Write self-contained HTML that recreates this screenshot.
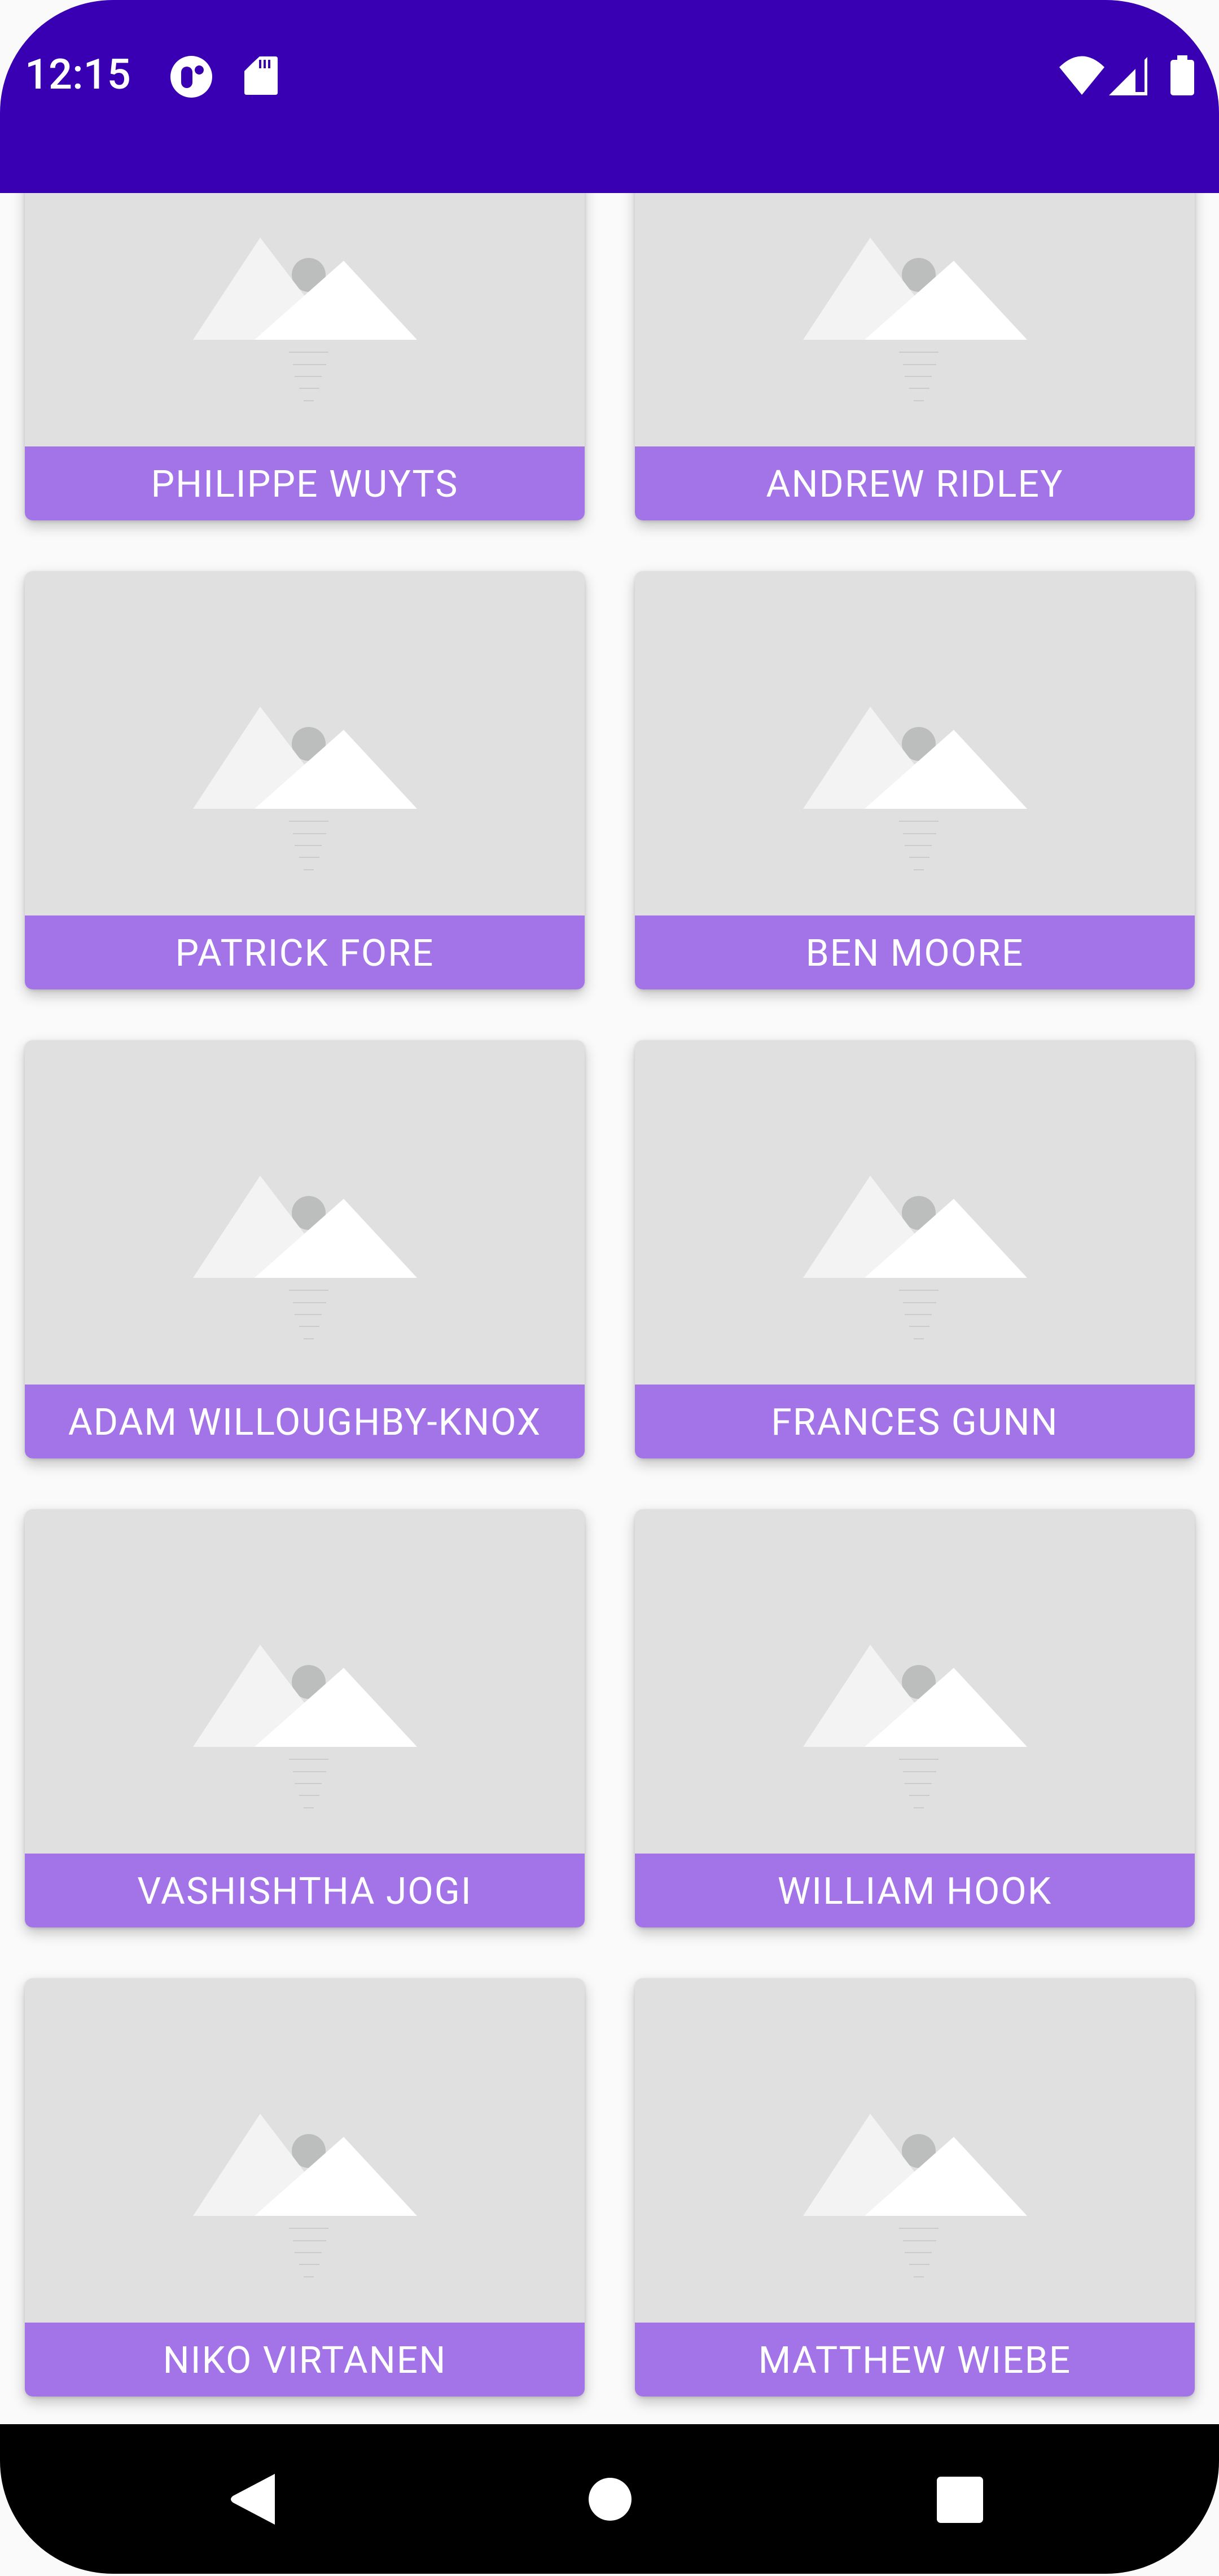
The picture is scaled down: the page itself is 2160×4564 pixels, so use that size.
<!DOCTYPE html>
<html><head><meta charset="utf-8"><style>
*{margin:0;padding:0;box-sizing:border-box}
body{width:2160px;height:4560px;background:#fafafa;position:relative;overflow:hidden;font-family:"Roboto","Liberation Sans",sans-serif}
.card{position:absolute;width:992px;height:741px;background:#e0e0e0;border-radius:14px;overflow:hidden;box-shadow:0 10px 24px rgba(0,0,0,0.22),0 2px 6px rgba(0,0,0,0.12)}
.card svg{position:absolute;left:0;top:0}
.lab{position:absolute;left:0;bottom:0;width:100%;height:131px;background:#a374e8;color:#fff;font-size:66px;letter-spacing:2px;text-align:center;line-height:136px}
.status{position:absolute;left:0;top:0;width:2160px;height:342px;background:#3900b3;border-radius:200px 200px 0 0}
.nav{position:absolute;left:0;top:4295px;width:2160px;height:265px;background:#000;border-radius:0 0 200px 200px}
</style></head><body>
<svg width="0" height="0" style="position:absolute"><defs><g id="ic" transform="translate(-44,0)">
<circle cx="547" cy="306" r="30" fill="#bcbdbd"/>
<polygon points="461,240 599,421 342,421" fill="#f3f3f3"/>
<polygon points="451,421 609,281 739,421" fill="#fff"/>
<g stroke="#c9cccc" stroke-width="2"><line x1="512" y1="443" x2="582" y2="443"/><line x1="519" y1="465" x2="578" y2="465"/><line x1="522" y1="486" x2="570" y2="486"/><line x1="530" y1="507" x2="566" y2="507"/><line x1="538" y1="529" x2="556" y2="529"/></g>
</g></defs></svg>

<div class="card" style="left:44px;top:181px"><svg width="992" height="741"><use href="#ic"/></svg><div class="lab">PHILIPPE WUYTS</div></div>
<div class="card" style="left:1125px;top:181px"><svg width="992" height="741"><use href="#ic"/></svg><div class="lab">ANDREW RIDLEY</div></div>
<div class="card" style="left:44px;top:1012px"><svg width="992" height="741"><use href="#ic"/></svg><div class="lab">PATRICK FORE</div></div>
<div class="card" style="left:1125px;top:1012px"><svg width="992" height="741"><use href="#ic"/></svg><div class="lab">BEN MOORE</div></div>
<div class="card" style="left:44px;top:1843px"><svg width="992" height="741"><use href="#ic"/></svg><div class="lab">ADAM WILLOUGHBY-KNOX</div></div>
<div class="card" style="left:1125px;top:1843px"><svg width="992" height="741"><use href="#ic"/></svg><div class="lab">FRANCES GUNN</div></div>
<div class="card" style="left:44px;top:2674px"><svg width="992" height="741"><use href="#ic"/></svg><div class="lab">VASHISHTHA JOGI</div></div>
<div class="card" style="left:1125px;top:2674px"><svg width="992" height="741"><use href="#ic"/></svg><div class="lab">WILLIAM HOOK</div></div>
<div class="card" style="left:44px;top:3505px"><svg width="992" height="741"><use href="#ic"/></svg><div class="lab">NIKO VIRTANEN</div></div>
<div class="card" style="left:1125px;top:3505px"><svg width="992" height="741"><use href="#ic"/></svg><div class="lab">MATTHEW WIEBE</div></div>

<div class="status">
<div style="position:absolute;left:44px;top:92px;color:#fff;font-size:74px;font-weight:500;line-height:82px">12:15</div>
<svg style="position:absolute;left:0;top:0" width="2160" height="342">
<circle cx="339" cy="136" r="37" fill="#fff"/>
<rect x="321" y="118" width="20" height="38" rx="10" fill="#3900b3"/>
<circle cx="353" cy="124" r="8" fill="#3900b3"/>
<path d="M447 112 L460 100 L488 100 Q492 100 492 104 L492 164 Q492 168 488 168 L437 168 Q433 168 433 164 L433 126 Z" fill="#fff"/>
<g fill="#3900b3"><rect x="459" y="106" width="4" height="15"/><rect x="467" y="106" width="4" height="15"/><rect x="475" y="106" width="4" height="15"/></g>
<path d="M1877 119 Q1917 80 1957 119 L1917 168 Z" fill="#fff"/>
<path d="M1965 169 L2033 101 L2033 169 Z" fill="#fff"/>
<path d="M2012 119 L2028 103 L2028 163 L2012 163 Z" fill="#3900b3"/>
<rect x="2086" y="98" width="18" height="10" fill="#fff"/>
<rect x="2074" y="106" width="42" height="63" rx="5" fill="#fff"/>
</svg>
</div>

<div class="nav">
<svg width="2160" height="265">
<path d="M487 88 L413 127 Q405 133 413 139 L487 178 Z" fill="#fff"/>
<circle cx="1081" cy="133" r="38" fill="#fff"/>
<rect x="1660" y="93" width="82" height="82" rx="7" fill="#fff"/>
</svg>
</div>
</body></html>
